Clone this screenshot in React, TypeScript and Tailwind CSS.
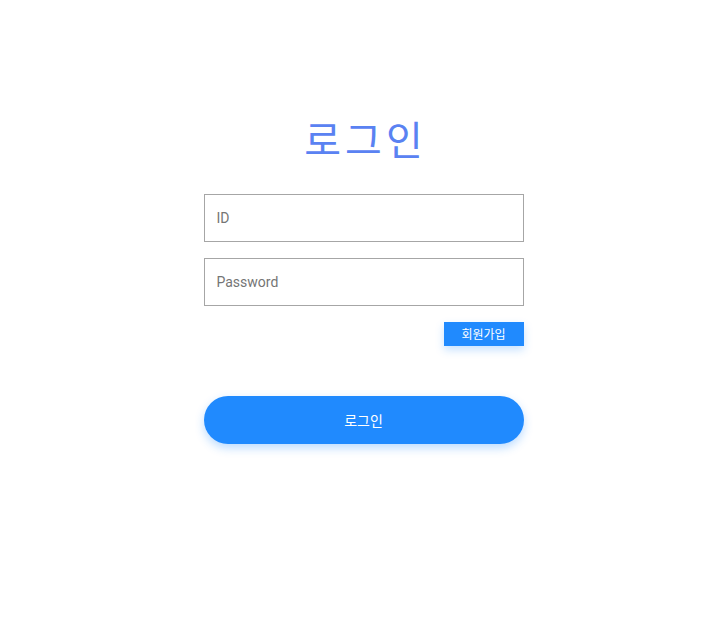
import { useState } from "react";

export default function App() {
  const [id, setId] = useState("");
  const [pw, setPw] = useState("");

  return (
    <div className="flex min-h-[629px] justify-center bg-white font-['Roboto','Noto_Sans_CJK_KR',sans-serif]">
      <form
        className="mt-[112px] flex w-[320px] flex-col"
        onSubmit={(e) => e.preventDefault()}
      >
        <h1 className="mb-[30px] pl-[4px] text-center font-['Noto_Sans_CJK_KR',sans-serif] text-[40px] leading-[52px] font-normal tracking-[4px] text-[#5a82f2]">
          로그인
        </h1>
        <input
          value={id}
          onChange={(e) => setId(e.target.value)}
          placeholder="ID"
          className="h-12 w-full border border-[#a6a6a6] px-3 text-sm text-gray-800 outline-none placeholder:text-[#757575]"
        />
        <input
          type="password"
          value={pw}
          onChange={(e) => setPw(e.target.value)}
          placeholder="Password"
          className="mt-4 h-12 w-full border border-[#a6a6a6] px-3 text-sm text-gray-800 outline-none placeholder:text-[#757575]"
        />
        <div className="mt-4 flex justify-end">
          <button
            type="button"
            className="h-6 w-20 bg-[#208afe] font-['Noto_Sans_CJK_KR',sans-serif] text-xs text-white shadow-[0_4px_8px_rgba(32,138,254,0.25)]"
          >
            회원가입
          </button>
        </div>
        <button
          type="submit"
          className="mt-[50px] h-12 w-full rounded-full bg-[#208afe] font-['Noto_Sans_CJK_KR',sans-serif] text-sm text-white shadow-[0_4px_10px_rgba(32,138,254,0.3)]"
        >
          로그인
        </button>
      </form>
    </div>
  );
}
